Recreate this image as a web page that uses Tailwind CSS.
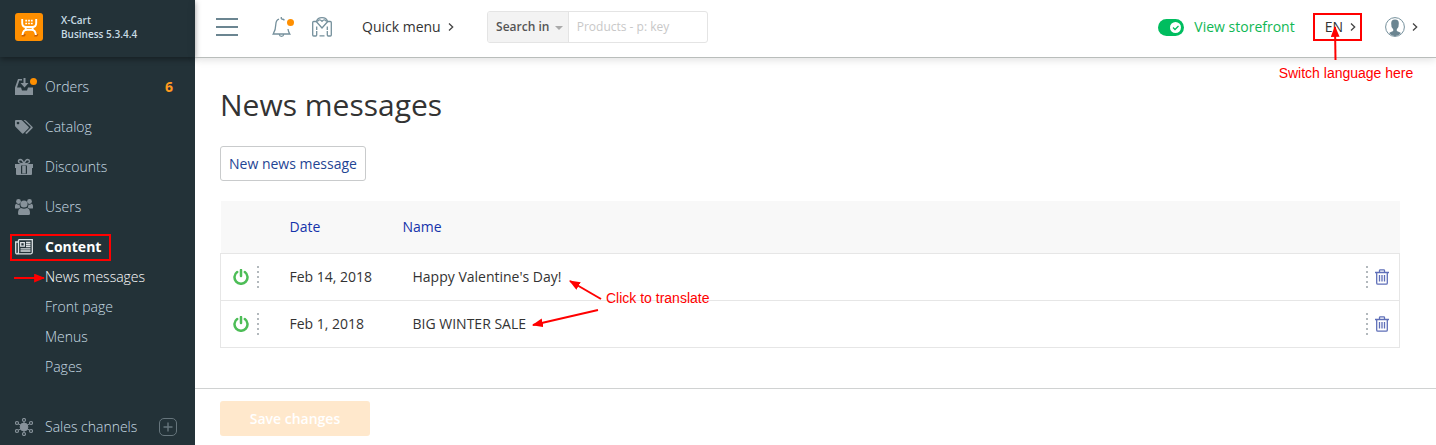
<!DOCTYPE html>
<html lang="en">
<head>
<meta charset="utf-8">
<title>News messages</title>
<script src="https://cdn.jsdelivr.net/npm/@tailwindcss/browser@4"></script>
</head>
<body class="flex min-h-screen bg-white font-['Open_Sans',sans-serif] text-sm text-[#333]">

<svg class="absolute size-0" aria-hidden="true">
  <defs>
    <symbol id="power" viewBox="0 0 16 16">
      <path d="M4.200 3A6.500 6.500 0 1 0 11.800 3" fill="none" stroke="#4dbd57" stroke-width="2.500" stroke-linecap="round"/>
      <path d="M8 1v6" stroke="#4dbd57" stroke-width="2.500" stroke-linecap="round"/>
    </symbol>
    <symbol id="grip" viewBox="0 0 3 22">
      <path d="M0 1h2M0 6h2M0 11h2M0 16h2M0 21h2" stroke="#9aa3a8" stroke-width="1.500"/>
    </symbol>
    <symbol id="trash" viewBox="0 0 14 16">
      <path d="M0 3.500h14M4.500 3.500V1.500q0-.7.7-.7h3.600q.7 0 .7.7v2M1.700 3.500v10.500q0 1.200 1.200 1.200h8.200q1.200 0 1.200-1.200V3.500M4.500 6v6.500M7 6v6.500M9.500 6v6.500" fill="none" stroke="#5f6fb8" stroke-width="1.300"/>
    </symbol>
    <symbol id="chev" viewBox="0 0 6 8">
      <path d="M1 .5 4.700 4 1 7.500" fill="none" stroke="#444" stroke-width="1.300"/>
    </symbol>
    <marker id="head" viewBox="0 0 10 8" refX="9" refY="4" markerWidth="11" markerHeight="9" markerUnits="userSpaceOnUse" orient="auto">
      <path d="M0 0 10 4 0 8z" fill="#f00"/>
    </marker>
  </defs>
</svg>

<aside class="relative w-[195px] shrink-0 bg-[#233238] text-[#c8dbe4]">
  <a href="#" class="flex h-[57px] items-center gap-[18px] pl-[15px] pb-1 text-[10px] leading-[14px] font-semibold shadow-[0_2px_6px_rgba(0,0,0,0.4)]">
    <svg class="size-7" viewBox="0 0 28 28">
      <rect width="28" height="28" rx="3" fill="#ff8f00"/>
      <path d="M7.500 20.500l3.500 1-1.500 2H6.500zM20.500 20.500l3 1-1.500 2h-3z" fill="#c95f00"/>
      <path d="M7.200 6v4q0 4 3.800 4h6.400q3.800 0 3.800-4V6M7.500 22q.5-5.200 4.500-5.200h4.400q4 0 4.500 5.200" fill="none" stroke="#fff" stroke-width="1.900"/>
      <path d="M9.800 13h1.900v4.500H9.800zM16.700 13h1.900v4.500h-1.900z" fill="#fff"/>
      <path d="M10.300 7.700h1.800m1 0h1.800m1 0h1.800M10.300 10.500h1.800m1 0h1.800m1 0h1.800" stroke="#fff" stroke-width="1.700"/>
    </svg>
    <span>X-Cart<br>Business 5.3.4.4</span>
  </a>
  <nav class="pt-[10px] font-light">
    <a href="#" class="flex h-10 items-center gap-3 pl-[15px] pr-[22px]">
      <svg class="h-[18px] w-[22px] -mr-1" viewBox="0 0 22 18">
        <path d="M3 1h4v1.500H4.300L2 9.500h4l1 3h5l1-3h5V17H0V9.500z" fill="#87929a"/>
        <path d="M8.500 0h2v5h3L9.500 9.500 5.500 5h3z" fill="#87929a"/>
        <circle cx="18.500" cy="3.500" r="3.500" fill="#ff8f00"/>
      </svg>
      <span class="flex-1">Orders</span><span class="font-bold text-[#ff9a1f]">6</span>
    </a>
    <a href="#" class="flex h-10 items-center gap-3 pl-[15px]">
      <svg class="size-[18px]" viewBox="0 0 18 18" fill="#87929a">
        <path fill-rule="evenodd" d="M0 3q0-1 1-1h5q.8 0 1.500.7l6 6q.8.800 0 1.600l-5 5q-.8.700-1.600 0l-6.200-6.200Q0 8.400 0 7.500zM3 3.700a1.300 1.300 0 1 0 .01 0z"/>
        <path d="M8.500 2h1.200q.8 0 1.500.7l6.200 6q.8.800 0 1.600l-5.200 5.300q-.7.600-1.500 0l-.5-.5 5-5q.9-.9 0-1.800z"/>
      </svg>
      <span>Catalog</span>
    </a>
    <a href="#" class="flex h-10 items-center gap-3 pl-[15px]">
      <svg class="size-[18px]" viewBox="0 0 18 18" fill="#87929a">
        <path d="M0 6h18v4h-1v6q0 1-1 1h-4V7.500H6V17H2q-1 0-1-1v-6H0z"/>
        <path d="M7.200 8h3.600v7.500H7.200z"/><path d="M6 15.800h6V17H6z"/>
        <path d="M9 6Q7.500 1.500 5.300 1.500 3.500 1.600 3.500 3.500 3.700 5.500 9 6q5.300-.5 5.500-2.500 0-1.900-1.800-2Q10.500 1.500 9 6z" fill="none" stroke="#87929a" stroke-width="1.500"/>
      </svg>
      <span>Discounts</span>
    </a>
    <a href="#" class="flex h-10 items-center gap-3 pl-[15px]">
      <svg class="size-[18px]" viewBox="0 0 18 18" fill="#87929a">
        <circle cx="3.500" cy="3.500" r="2.400"/><circle cx="14.500" cy="3.500" r="2.400"/><circle cx="9" cy="6" r="3.600"/>
        <path d="M0 10V8q0-2 1.500-2.200Q3 7 4.500 6.500 4.600 8.600 5.500 9.400 4.200 9.600 3.500 10.500H.8Q0 10.500 0 10zM18 10V8q0-2-1.500-2.200Q15 7 13.500 6.500q-.1 2.100-1 2.900 1.300.2 2 1.100h2.700q.8 0 .8-.5zM3 15.500q0-5.300 3-5.500 3 1.500 6 0 3 .2 3 5.500 0 1.500-1.500 1.500h-9Q3 17 3 15.500z"/>
      </svg>
      <span>Users</span>
    </a>
    <a href="#" class="relative flex h-10 items-center gap-3 pl-[15px] font-bold text-white">
      <svg class="size-[18px]" viewBox="0 0 18 18" fill="none" stroke="#dce1e4" stroke-width="1.300">
        <path d="M3.500 1.700h13.800v12.600q0 1.500-1.500 1.500H2.200q-1.500 0-1.500-1.500V4h2.500M3.500 1.700v12.500q0 1.300-1.200 1.500"/>
        <path d="M5.700 4.700h3.600v3.500H5.700zM11 4.500h4.500M11 6.500h4.500M11 8.500h4.500M5.500 10.800h10M5.500 13h10"/>
      </svg>
      <span>Content</span>
      <span class="absolute top-[7px] left-[10px] h-[27px] w-[101px] border-2 border-[#f00]"></span>
    </a>
    <ul class="-mt-[5px] mb-[27px]">
      <li class="relative h-[30px] pl-[45px] leading-[30px]"><a href="#" class="text-white">News messages</a>
        <svg class="absolute top-[7px] left-[13px] h-4 w-8" viewBox="0 0 32 16"><path d="M1 9h30" stroke="#f00" stroke-width="2" marker-end="url(#head)"/></svg>
      </li>
      <li class="h-[30px] pl-[45px] leading-[30px]"><a href="#">Front page</a></li>
      <li class="h-[30px] pl-[45px] leading-[30px]"><a href="#">Menus</a></li>
      <li class="h-[30px] pl-[45px] leading-[30px]"><a href="#">Pages</a></li>
    </ul>
    <div class="flex h-9 items-center gap-3 pl-[15px] pr-[18px]">
      <svg class="size-[18px]" viewBox="0 0 18 18" fill="none" stroke="#87929a">
        <path d="M9 3v12M2 5l14 8M2 13l14-8"/>
        <circle cx="9" cy="9" r="3.900" fill="#87929a"/>
        <g fill="#233238" stroke-width="1.200"><circle cx="9" cy="2" r="1.500"/><circle cx="9" cy="16" r="1.500"/><circle cx="2" cy="5" r="1.500"/><circle cx="16" cy="5" r="1.500"/><circle cx="2" cy="13" r="1.500"/><circle cx="16" cy="13" r="1.500"/></g>
      </svg>
      <a href="#" class="flex-1">Sales channels</a>
      <button type="button" aria-label="Add sales channel">
        <svg class="block size-[18px]" viewBox="0 0 18 18" fill="none" stroke="#66757c"><rect x=".5" y=".5" width="17" height="17" rx="4.500"/><path d="M9 4.500v9M4.500 9h9" stroke-width="1.400"/></svg>
      </button>
    </div>
  </nav>
</aside>

<div class="flex min-w-0 flex-1 flex-col">
  <header class="relative flex h-[58px] items-center border-b border-[#b9bdbb] pl-5 pr-[18px] pb-[3px] shadow-[0_2px_8px_rgba(0,0,0,0.12)]">
    <button type="button" aria-label="Toggle menu">
      <svg class="h-[18px] w-[23px]" viewBox="0 0 23 18"><path d="M1 1h22M1 9h22M1 17h22" stroke="#6b8591" stroke-width="2"/></svg>
    </button>
    <button type="button" aria-label="Notifications" class="ml-[34px]">
      <svg class="h-5 w-[22px]" viewBox="0 0 22 20" fill="none" stroke="#75909c" stroke-width="1.300">
        <path d="M7 2.200Q4 3.200 3.800 7.500q-.1 5.500-2.600 9.500h16.600q-1.500-2.200-1.800-5M9.300 0v2M9.300 2q2 0 3.200 1.200M7.300 17.500q.3 1.800 2.200 1.800t2.200-1.800"/>
        <circle cx="18.500" cy="5.500" r="3.500" fill="#ff8f00" stroke="none"/>
      </svg>
    </button>
    <button type="button" aria-label="Marketplace" class="ml-[18px]">
      <svg class="h-5 w-5" viewBox="0 0 20 20" fill="none" stroke="#75909c" stroke-width="1.300">
        <path d="M4.700 14v4q0 1-1 1H1.700q-1 0-1-1V5.500q0-1 1-1h2.500L10 11l5.800-6.500h2.500q1 0 1 1v12.500q0 1-1 1h-2q-1 0-1-1v-4M4.700 9.500v3.500M15.300 9.500v3.500M4.400 4.500Q5.500.7 10 .7t5.600 3.800M5.500 4.500Q7.500 1.500 10 4.300q2.500-2.800 4.500.2M7.500 18.800h5"/>
      </svg>
    </button>
    <button type="button" class="ml-[30px] flex items-center gap-[7px]">Quick menu <svg class="h-2 w-1.5" viewBox="0 0 6 8"><use href="#chev"/></svg></button>
    <form class="ml-[33px] flex h-8 w-[221px] overflow-hidden rounded-[3px] border border-[#e4e4e4] text-xs">
      <button type="button" class="flex w-[81px] shrink-0 items-center justify-center gap-1.5 border-r border-[#e4e4e4] bg-[#f3f3f3] pl-1 font-semibold text-[#555]">Search in
        <svg class="mt-0.5 h-1 w-2" viewBox="0 0 8 4"><path d="M0 0h8L4 4z" fill="#aaa"/></svg></button>
      <input type="text" aria-label="Search" placeholder="Products - p: key" class="min-w-0 flex-1 px-2 outline-none placeholder:text-[#c8c8c8]">
    </form>
    <a href="#" class="ml-auto flex items-center gap-[10px] text-[#0fb754]">
      <svg class="h-[17px] w-[26px]" viewBox="0 0 26 17"><rect width="26" height="17" rx="8.500" fill="#00bd5f"/><circle cx="17.500" cy="8.500" r="5.500" fill="#fff"/><path d="m15 8.500 2 2 3.500-3.500" fill="none" stroke="#00bd5f" stroke-width="1.300"/></svg>
      View storefront
    </a>
    <div class="relative ml-[30px] flex">
      <button type="button" class="flex items-center gap-[7px]">EN <svg class="h-2 w-1.5" viewBox="0 0 6 8"><use href="#chev"/></svg></button>
      <span class="absolute -top-[4px] -left-[12px] h-[28px] w-[49px] border-2 border-[#f00]"></span>
      <svg class="absolute top-[8px] left-[2px] h-9 w-4" viewBox="0 0 16 36"><path d="M8.500 35 8 2" stroke="#f00" stroke-width="2" marker-end="url(#head)"/></svg>
      <span class="absolute top-[48px] -left-[46px] font-['Liberation_Sans',sans-serif] text-sm leading-4 whitespace-nowrap text-[#f00]">Switch language here</span>
    </div>
    <button type="button" aria-label="Account" class="ml-[29px] flex items-center gap-[7px]">
      <svg class="size-5" viewBox="0 0 20 20"><circle cx="10" cy="10" r="9.400" fill="#fff" stroke="#75909c"/><path d="M6.200 6.500Q6 2.500 10 2.500t3.800 4q.3 4-2 5.800v1.700q2.500.8 4.200 2-2.500 3.200-6 3.200T4 16q1.700-1.200 4.200-2v-1.700q-2.300-1.800-2-5.800z" fill="#6b8591"/></svg>
      <svg class="h-2 w-1.5" viewBox="0 0 6 8"><use href="#chev"/></svg>
    </button>
  </header>

  <main class="flex-1 pt-[26px] pr-9 pb-10 pl-[25px]">
    <h1 class="text-[30px] leading-[42px] text-[#333]">News messages</h1>
    <button type="button" class="mt-5 h-[35px] rounded-[3px] border border-[#c9cbcc] px-2 text-[#1f4594]">New news message</button>
    <div class="relative mt-5">
      <table class="w-full table-fixed border-collapse text-left">
        <thead class="bg-[#f8f8f8] text-[#1533ab]">
          <tr class="h-[52px]">
            <th class="w-[69px]"></th><th class="w-[113px] font-normal">Date</th><th class="font-normal">Name</th><th class="w-[34px]"></th>
          </tr>
        </thead>
        <tbody class="border border-[#e6e6e6]">
          <tr class="h-[47px] border-b border-[#e6e6e6]">
            <td><div class="flex items-center gap-2 pl-3"><button type="button" aria-label="Disable Happy Valentine's Day!"><svg class="block size-4"><use href="#power"/></svg></button><svg class="h-[22px] w-[3px]"><use href="#grip"/></svg></div></td>
            <td>Feb 14, 2018</td>
            <td><a href="#" class="ml-[10px]">Happy Valentine's Day!</a></td>
            <td><div class="flex items-center gap-1.5"><svg class="h-[22px] w-[3px]"><use href="#grip"/></svg><button type="button" aria-label="Delete Happy Valentine's Day!"><svg class="block h-4 w-3.5"><use href="#trash"/></svg></button></div></td>
          </tr>
          <tr class="h-[47px]">
            <td><div class="flex items-center gap-2 pl-3"><button type="button" aria-label="Disable BIG WINTER SALE"><svg class="block size-4"><use href="#power"/></svg></button><svg class="h-[22px] w-[3px]"><use href="#grip"/></svg></div></td>
            <td>Feb 1, 2018</td>
            <td><a href="#" class="ml-[10px]">BIG WINTER SALE</a></td>
            <td><div class="flex items-center gap-1.5"><svg class="h-[22px] w-[3px]"><use href="#grip"/></svg><button type="button" aria-label="Delete BIG WINTER SALE"><svg class="block h-4 w-3.5"><use href="#trash"/></svg></button></div></td>
          </tr>
        </tbody>
      </table>
      <svg class="absolute top-[75px] left-[310px] h-[54px] w-[74px]" viewBox="0 0 74 54" fill="none" stroke="#f00" stroke-width="2">
        <path d="M71 23 40 5" marker-end="url(#head)"/><path d="M68 34 3 49" marker-end="url(#head)"/>
      </svg>
      <span class="absolute top-[89px] left-[386px] font-['Liberation_Sans',sans-serif] leading-4 text-[#f00]">Click to translate</span>
    </div>
  </main>

  <footer class="h-[57px] border-t border-[#d0d2d2] pt-3 pl-[25px]">
    <button type="submit" disabled class="h-[35px] w-[150px] rounded-[3px] bg-[#ffe8cc] font-semibold text-white">Save changes</button>
  </footer>
</div>
</body>
</html>
